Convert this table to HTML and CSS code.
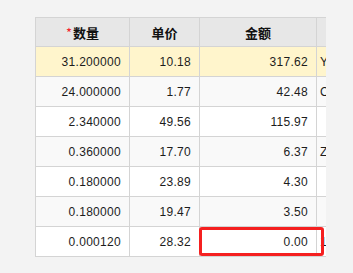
FILE: index.html
```html
<!DOCTYPE html>
<html lang="zh">
<head>
<meta charset="utf-8">
<link rel="stylesheet" href="styles.css">
</head>
<body>
<div class="page">
  <div class="grid">
    <div class="row head">
      <div class="cell c1"><span class="req">*</span>数量</div>
      <div class="cell c2">单价</div>
      <div class="cell c3">金额</div>
      <div class="cell c4"></div>
    </div>
    <div class="row sel">
      <div class="cell c1">31.200000</div>
      <div class="cell c2">10.18</div>
      <div class="cell c3">317.62</div>
      <div class="cell c4">Y</div>
    </div>
    <div class="row alt">
      <div class="cell c1">24.000000</div>
      <div class="cell c2">1.77</div>
      <div class="cell c3">42.48</div>
      <div class="cell c4">C</div>
    </div>
    <div class="row">
      <div class="cell c1">2.340000</div>
      <div class="cell c2">49.56</div>
      <div class="cell c3">115.97</div>
      <div class="cell c4"></div>
    </div>
    <div class="row alt">
      <div class="cell c1">0.360000</div>
      <div class="cell c2">17.70</div>
      <div class="cell c3">6.37</div>
      <div class="cell c4">Z</div>
    </div>
    <div class="row">
      <div class="cell c1">0.180000</div>
      <div class="cell c2">23.89</div>
      <div class="cell c3">4.30</div>
      <div class="cell c4"></div>
    </div>
    <div class="row alt">
      <div class="cell c1">0.180000</div>
      <div class="cell c2">19.47</div>
      <div class="cell c3">3.50</div>
      <div class="cell c4"></div>
    </div>
    <div class="row last">
      <div class="cell c1">0.000120</div>
      <div class="cell c2">28.32</div>
      <div class="cell c3">0.00</div>
      <div class="cell c4">1</div>
      <div class="mark"></div>
    </div>
  </div>
</div>
</body>
</html>
```
FILE: styles.css
```css
html, body {
  margin: 0;
  padding: 0;
  background: #f3f3f3;
}
.page {
  padding: 17px 0 0 35px;
  font-family: "Liberation Sans", Arial, "Noto Sans CJK SC", sans-serif;
  font-size: 12px;
  letter-spacing: 0.3px;
  color: #1c1c1c;
}
.grid {
  width: 291px;
  overflow: hidden;
}
.row {
  display: flex;
  width: 400px;
  height: 30px;
  border-left: 1px solid #d4d4d4;
  background: #fff;
}
.row.head {
  height: 29px;
  border-top: 1px solid #d4d4d4;
  background: #e7e7e7;
  font-family: "Noto Sans CJK SC", sans-serif;
  font-weight: bold;
  font-size: 13px;
  letter-spacing: 0;
  color: #111;
}
.row.sel { background: #fff5cc; }
.row.alt { background: #f9f9f9; }
.row.last { position: relative; }
.cell {
  box-sizing: border-box;
  display: flex;
  align-items: center;
  justify-content: flex-end;
  padding-right: 8px;
  border-right: 1px solid #d4d4d4;
  border-bottom: 1px solid #d4d4d4;
  white-space: nowrap;
}
.head .cell { justify-content: center; padding-right: 0; }
.c1 { width: 94px; }
.c2 { width: 70px; }
.c3 { width: 117px; }
.c4 { width: 100px; justify-content: flex-start; padding: 0 0 0 3px; }
.req { color: #f5222d; font-weight: normal; margin-right: 1px; }
.mark {
  position: absolute;
  left: 163px;
  top: 0;
  width: 125px;
  height: 29px;
  box-sizing: border-box;
  border: 3px solid #f52020;
  border-radius: 3px;
}
```
